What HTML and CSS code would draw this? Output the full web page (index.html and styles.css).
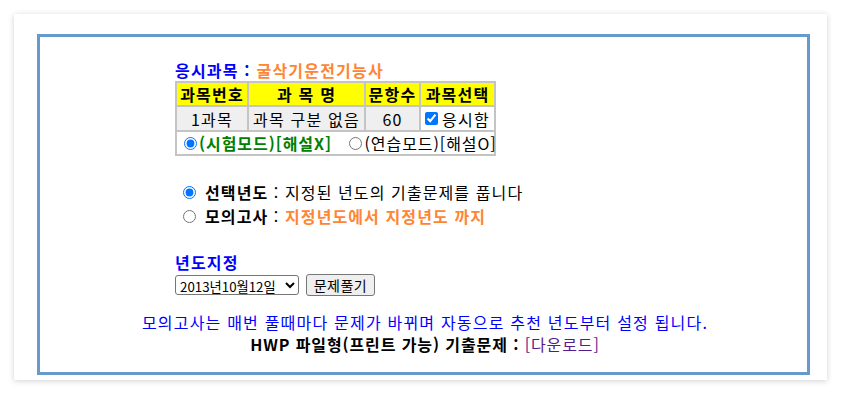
FILE: index.html
```html
<!DOCTYPE html>
<html lang="ko">
<head>
<meta charset="utf-8">
<title>기출문제</title>
<link rel="stylesheet" href="styles.css">
</head>
<body>
<div class="card">
  <div class="frame">
    <div class="content">
      <div class="subject"><b class="blue">응시과목 :</b> <b class="orange">굴삭기운전기능사</b></div>
      <table class="subj-table">
        <tr class="head">
          <th class="c1">과목번호</th>
          <th class="c2">과 목 명</th>
          <th class="c3">문항수</th>
          <th class="c4">과목선택</th>
        </tr>
        <tr class="row">
          <td>1과목</td>
          <td>과목 구분 없음</td>
          <td>60</td>
          <td class="white"><label class="chk"><input type="checkbox" checked>응시함</label></td>
        </tr>
        <tr class="modes">
          <td colspan="4">
            <label class="mode"><input type="radio" name="mode" checked><b class="green">(시험모드)[해설X]</b></label>
            <label class="mode second"><input type="radio" name="mode">(연습모드)[해설O]</label>
          </td>
        </tr>
      </table>

      <div class="choices">
        <label class="choice"><input type="radio" name="kind" checked><b>선택년도</b> : 지정된 년도의 기출문제를 풉니다</label>
        <label class="choice"><input type="radio" name="kind"><b>모의고사</b> : <b class="orange">지정년도에서 지정년도 까지</b></label>
      </div>

      <div class="year-title"><b class="blue">년도지정</b></div>
      <div class="year-row">
        <select class="year-select"><option>2013년10월12일</option></select>
        <button class="solve" type="button">문제풀기</button>
      </div>
    </div>
    <p class="note">모의고사는 매번 풀때마다 문제가 바뀌며 자동으로 추천 년도부터 설정 됩니다.</p>
    <p class="hwp"><b>HWP 파일형(프린트 가능) 기출문제 :</b> <a class="dl" href="#">[다운로드]</a></p>
  </div>
</div>
</body>
</html>
```
FILE: styles.css
```css
* { box-sizing: border-box; }
html, body { margin: 0; padding: 0; }
body {
  background: #ffffff;
  font-family: "Noto Sans CJK KR", "Noto Sans", sans-serif;
  font-size: 16px;
  letter-spacing: 1.2px;
  color: #000;
  width: 843px;
  height: 395px;
  overflow: hidden;
  padding: 14px 16px 0 14px;
}
.card {
  width: 813px;
  height: 366px;
  background: #fff;
  box-shadow: 0 1px 6px rgba(0,0,0,0.18);
  padding: 20px 17px 5px 23px;
}
.frame {
  border: 3px solid #6699cc;
  height: 341px;
  padding: 22px 0 0 0;
}
.content {
  padding-left: 135px;
}
.blue { color: #0000ff; }
.orange { color: #ff8533; }
.green { color: #008000; }
.subject {
  line-height: 22px;
  height: 22px;
}
.subj-table {
  margin-top: 0;
  background: #c4c4c4;
  border-spacing: 2px;
  border-collapse: separate;
  line-height: 20px;
  width: 321px;
  table-layout: fixed;
}
.subj-table th, .subj-table td {
  padding: 0;
  text-align: center;
  white-space: nowrap;
}
.head th {
  background: #ffff00;
  font-weight: bold;
  height: 22px;
}
.c1 { width: 70px; }
.c2 { width: 115px; }
.c3 { width: 53px; }
.c4 { width: 73px; }
.row td {
  background: #efefef;
  height: 23px;
}
.row td.white { background: #fff; }
.chk { display: inline-flex; align-items: center; }
.chk input { margin: 0 4px 0 0; width: 13px; height: 13px; }
.modes td {
  background: #fff;
  height: 22px;
  text-align: left;
  padding: 0 0 0 5px;
  letter-spacing: 0.95px;
}
.mode { display: inline-flex; align-items: center; }
.mode input { margin: 0 2px 0 2px; width: 13px; height: 13px; }
.mode.second { margin-left: 10px; }
.choices {
  margin-top: 24px;
  padding-left: 8px;
  display: flex;
  flex-direction: column;
}
.choice {
  display: flex;
  align-items: center;
  height: 24px;
  white-space: pre;
  letter-spacing: 1.1px;
}
.choice input { margin: 0 9px 0 0; width: 13px; height: 13px; }
.year-title {
  margin-top: 23px;
  line-height: 22px;
}
.year-row {
  display: flex;
  align-items: center;
  gap: 7px;
  margin-top: 1px;
}
.year-select {
  width: 124px;
  height: 20px;
  font-family: "Noto Sans CJK KR", "Noto Sans", sans-serif;
  font-size: 13.3px;
  letter-spacing: 0;
  border: 1px solid #767676;
  border-radius: 3px;
  background: #fff;
  padding: 0;
}
.solve {
  height: 22px;
  width: 69px;
  font-family: "Noto Sans CJK KR", "Noto Sans", sans-serif;
  font-size: 14px;
  letter-spacing: 0.5px;
  background: #efefef;
  border: 1px solid #767676;
  border-radius: 3px;
  padding: 0;
}
.note {
  margin: 15px 0 0 0;
  text-align: center;
  color: #0000ff;
  line-height: 22px;
  padding-left: 3px;
}
.hwp {
  margin: 0;
  text-align: center;
  line-height: 22px;
  padding-left: 3px;
  letter-spacing: 0.9px;
}
.dl { color: #551a8b; text-decoration: none; }
```
